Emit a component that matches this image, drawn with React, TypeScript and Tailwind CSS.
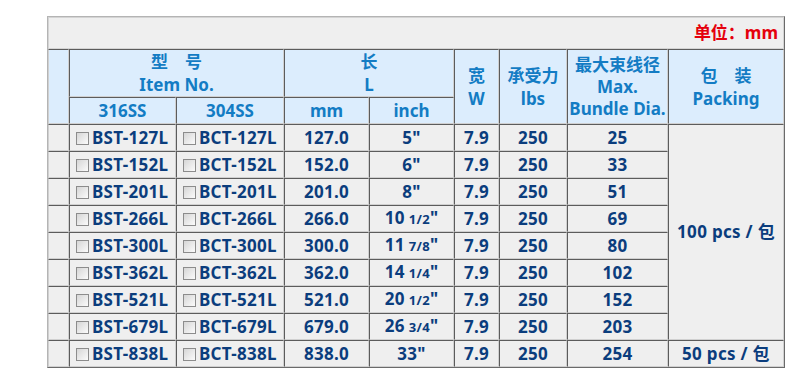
import React from "react";

type Row = {
  code: string;
  mm: string;
  whole: string;
  frac?: string;
  dia: string;
};

const rows: Row[] = [
  { code: "127L", mm: "127.0", whole: "5", dia: "25" },
  { code: "152L", mm: "152.0", whole: "6", dia: "33" },
  { code: "201L", mm: "201.0", whole: "8", dia: "51" },
  { code: "266L", mm: "266.0", whole: "10", frac: "1/2", dia: "69" },
  { code: "300L", mm: "300.0", whole: "11", frac: "7/8", dia: "80" },
  { code: "362L", mm: "362.0", whole: "14", frac: "1/4", dia: "102" },
  { code: "521L", mm: "521.0", whole: "20", frac: "1/2", dia: "152" },
  { code: "679L", mm: "679.0", whole: "26", frac: "3/4", dia: "203" },
  { code: "838L", mm: "838.0", whole: "33", dia: "254" },
];

// inset look of an old html table cell
const cell =
  "border border-solid border-t-[#5c5c5c] border-l-[#5c5c5c] border-b-[#d0d0d0] border-r-[#d0d0d0] p-0";
const head = `${cell} bg-[#dcedfd] text-[#137cc4] text-center align-middle`;
const data = `${cell} bg-[#efefef] text-[#0b3d7d] text-center align-middle tracking-[0.3px]`;

const CheckBox = () => (
  <span className="inline-block w-[13px] h-[13px] border border-[#8c8c8c] bg-gradient-to-br from-[#d6d6d6] to-[#fbfbfb] align-[-1px] mr-[3px]" />
);

const App = () => {
  return (
    <div className="bg-white w-[800px] h-[371px] pt-[16px] pl-[47px] font-['Noto_Sans','Noto_Sans_CJK_SC',sans-serif] font-bold text-[17px] leading-[22px]">
      <table className="table-fixed w-[738px] border-separate border-spacing-0 border border-solid border-t-[#b4b4b4] border-l-[#b4b4b4] border-b-[#6a6a6a] border-r-[#6a6a6a] bg-[#efefef]">
        <colgroup>
          <col className="w-[21px]" />
          <col className="w-[107px]" />
          <col className="w-[108px]" />
          <col className="w-[85px]" />
          <col className="w-[85px]" />
          <col className="w-[45px]" />
          <col className="w-[68px]" />
          <col className="w-[101px]" />
          <col className="w-[116px]" />
        </colgroup>
        <tbody>
          <tr className="h-[32px]">
            <td
              colSpan={9}
              className="border border-solid border-[#d4d4d4] bg-[#efefef] text-right pr-[5px] text-[#e5000c] align-middle"
            >
              单位：mm
            </td>
          </tr>
          <tr className="h-[48px]">
            <td rowSpan={2} className={`${head} border-l-[#d0d0d0]`} />
            <td colSpan={2} className={`${head} leading-[23px]`}>
              <div>型　号</div>
              <div>Item No.</div>
            </td>
            <td colSpan={2} className={`${head} leading-[23px]`}>
              <div>长</div>
              <div>L</div>
            </td>
            <td rowSpan={2} className={`${head} leading-[23px]`}>
              <div>宽</div>
              <div>W</div>
            </td>
            <td rowSpan={2} className={`${head} leading-[23px]`}>
              <div>承受力</div>
              <div>lbs</div>
            </td>
            <td rowSpan={2} className={head}>
              <div>最大束线径</div>
              <div>Max.</div>
              <div>Bundle Dia.</div>
            </td>
            <td rowSpan={2} className={`${head} leading-[23px]`}>
              <div>包　装</div>
              <div>Packing</div>
            </td>
          </tr>
          <tr className="h-[27px]">
            <td className={head}>316SS</td>
            <td className={head}>304SS</td>
            <td className={head}>mm</td>
            <td className={head}>inch</td>
          </tr>
          {rows.map((r, i) => (
            <tr key={r.code} className="h-[27px]">
              <td className={`${data} border-l-[#d0d0d0]`} />
              <td className={`${data} text-left pl-[6px] whitespace-nowrap`}>
                <CheckBox />
                BST-{r.code}
              </td>
              <td className={`${data} text-left pl-[6px] whitespace-nowrap`}>
                <CheckBox />
                BCT-{r.code}
              </td>
              <td className={data}>{r.mm}</td>
              <td className={data}>
                {r.whole}
                {r.frac && <span className="text-[13px] ml-[4px]">{r.frac}</span>}
                &quot;
              </td>
              <td className={data}>7.9</td>
              <td className={data}>250</td>
              <td className={data}>{r.dia}</td>
              {i === 0 && (
                <td rowSpan={8} className={data}>
                  100 pcs / 包
                </td>
              )}
              {i === 8 && <td className={data}>50 pcs / 包</td>}
            </tr>
          ))}
        </tbody>
      </table>
    </div>
  );
};

export default App;
